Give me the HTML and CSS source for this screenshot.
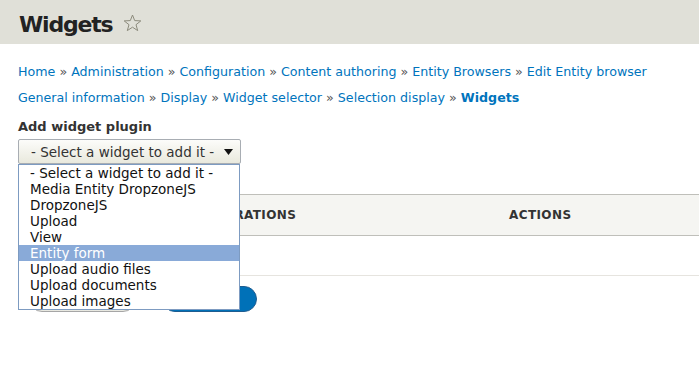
FILE: index.html
```html
<!DOCTYPE html>
<html lang="en">

<head>
    <meta charset="UTF-8">
    <meta name="viewport" content="width=device-width, initial-scale=1.0">
    <title>Widgets</title>
    <link rel="stylesheet" href="styles.css">
</head>

<body>
    <header class="page-header">
        <h1 class="page-title">Widgets<svg class="star" width="19" height="18" viewBox="0 0 19 18">
                <polygon points="9.5,1 11.7,6.6 17.8,6.9 13,10.7 14.7,16.6 9.5,13.2 4.3,16.6 6,10.7 1.2,6.9 7.3,6.6"
                    fill="none" stroke="#8c8b7c" stroke-width="1" stroke-linejoin="round" />
            </svg></h1>
    </header>

    <main class="content">
        <nav class="breadcrumb">
            <a href="#">Home</a> <span class="sep">»</span>
            <a href="#">Administration</a> <span class="sep">»</span>
            <a href="#">Configuration</a> <span class="sep">»</span>
            <a href="#">Content authoring</a> <span class="sep">»</span>
            <a href="#">Entity Browsers</a> <span class="sep">»</span>
            <a href="#">Edit Entity browser</a><br>
            <a href="#">General information</a> <span class="sep">»</span>
            <a href="#">Display</a> <span class="sep">»</span>
            <a href="#">Widget selector</a> <span class="sep">»</span>
            <a href="#">Selection display</a> <span class="sep">»</span>
            <a href="#" class="current">Widgets</a>
        </nav>

        <form class="widgets-form">
            <div class="form-item">
                <label class="form-label">Add widget plugin</label>
                <div class="select-wrap">
                    <div class="select">
                        <span>- Select a widget to add it -</span>
                        <svg class="arrow" width="9" height="6" viewBox="0 0 9 6">
                            <polygon points="0,0 9,0 4.5,6" fill="#111" />
                        </svg>
                    </div>
                    <ul class="select-popup">
                        <li>- Select a widget to add it -</li>
                        <li>Media Entity DropzoneJS</li>
                        <li>DropzoneJS</li>
                        <li>Upload</li>
                        <li>View</li>
                        <li class="active">Entity form</li>
                        <li>Upload audio files</li>
                        <li>Upload documents</li>
                        <li>Upload images</li>
                    </ul>
                </div>
            </div>

            <table class="widgets-table">
                <thead>
                    <tr>
                        <th class="col-form">Form</th>
                        <th class="col-ops">Operations</th>
                        <th>Actions</th>
                    </tr>
                </thead>
                <tbody>
                    <tr>
                        <td colspan="3">&nbsp;</td>
                    </tr>
                </tbody>
            </table>

            <div class="form-actions">
                <button type="button" class="button">Previous</button>
                <button type="button" class="button button-primary">Finish</button>
            </div>
        </form>
    </main>
</body>

</html>
```

FILE: styles.css
```css
body {
    font-family: "DejaVu Sans", "Liberation Sans", sans-serif;
    font-size: 13px;
    color: #333;
    background: #fff;
    margin: 0;
}

.page-header {
    background-color: #e0e0d8;
    height: 44px;
    box-sizing: border-box;
    padding: 6px 0 0 19px;
}

.page-title {
    margin: 0;
    font-size: 22px;
    line-height: 38px;
    font-weight: bold;
    letter-spacing: -1.2px;
    color: #222;
}

.page-title .star {
    margin-left: 11px;
    vertical-align: baseline;
}

.content {
    padding: 0 0 0 18px;
}

.breadcrumb {
    margin-top: 15px;
    font-size: 12.65px;
    line-height: 26px;
}

.breadcrumb a {
    color: #0074bd;
    text-decoration: none;
}

.breadcrumb .sep {
    color: #555;
}

.breadcrumb .current {
    font-weight: bold;
}

.form-item {
    margin-top: 7px;
}

.form-label {
    display: block;
    font-weight: bold;
    line-height: 18px;
    margin-bottom: 3px;
}

.select-wrap {
    position: relative;
    width: 223px;
    z-index: 2;
}

.select {
    display: flex;
    align-items: center;
    justify-content: space-between;
    box-sizing: border-box;
    height: 25px;
    padding: 0 7px 0 12px;
    border: 1px solid #a8adb3;
    border-radius: 2px;
    background: linear-gradient(#fcfcfa, #e9e9dd);
    font-size: 13.5px;
    color: #333;
}

.select-popup {
    position: absolute;
    top: 25px;
    left: 0;
    width: 222px;
    margin: 0;
    padding: 0;
    list-style: none;
    background: #fff;
    border: 1px solid #7d9bc1;
    box-sizing: border-box;
    font-size: 13.5px;
    color: #111;
}

.select-popup li {
    height: 16px;
    line-height: 16px;
    padding-left: 11px;
    white-space: nowrap;
}

.select-popup li.active {
    background-color: #89aad8;
    color: #fff;
}

.widgets-table {
    width: 100%;
    margin-top: 30px;
    border-collapse: collapse;
    table-layout: fixed;
}

.widgets-table th {
    height: 40px;
    padding: 0 12px;
    text-align: left;
    text-transform: uppercase;
    font-size: 12px;
    letter-spacing: 0.4px;
    color: #333;
    background: #f5f5f2;
    border-top: 1px solid #bfbfba;
    border-bottom: 1px solid #bfbfba;
}

.widgets-table .col-form {
    width: 152px;
}

.widgets-table .col-ops {
    width: 279px;
}

.widgets-table td {
    height: 39px;
    padding: 0 12px;
    border-bottom: 1px solid #e6e4df;
}

.form-actions {
    display: flex;
    gap: 26px;
    margin-top: 10px;
    padding-left: 11px;
}

.button {
    width: 107px;
    height: 26px;
    padding: 0;
    border-radius: 20em;
    border: 1px solid #a6a6a6;
    background: linear-gradient(#fefefe, #e8e8e0);
    font-family: inherit;
    font-size: 13px;
    color: #333;
}

.button-primary {
    width: 95px;
    border-color: #1e5c90;
    background: #0071b8;
    color: #fff;
}
```
